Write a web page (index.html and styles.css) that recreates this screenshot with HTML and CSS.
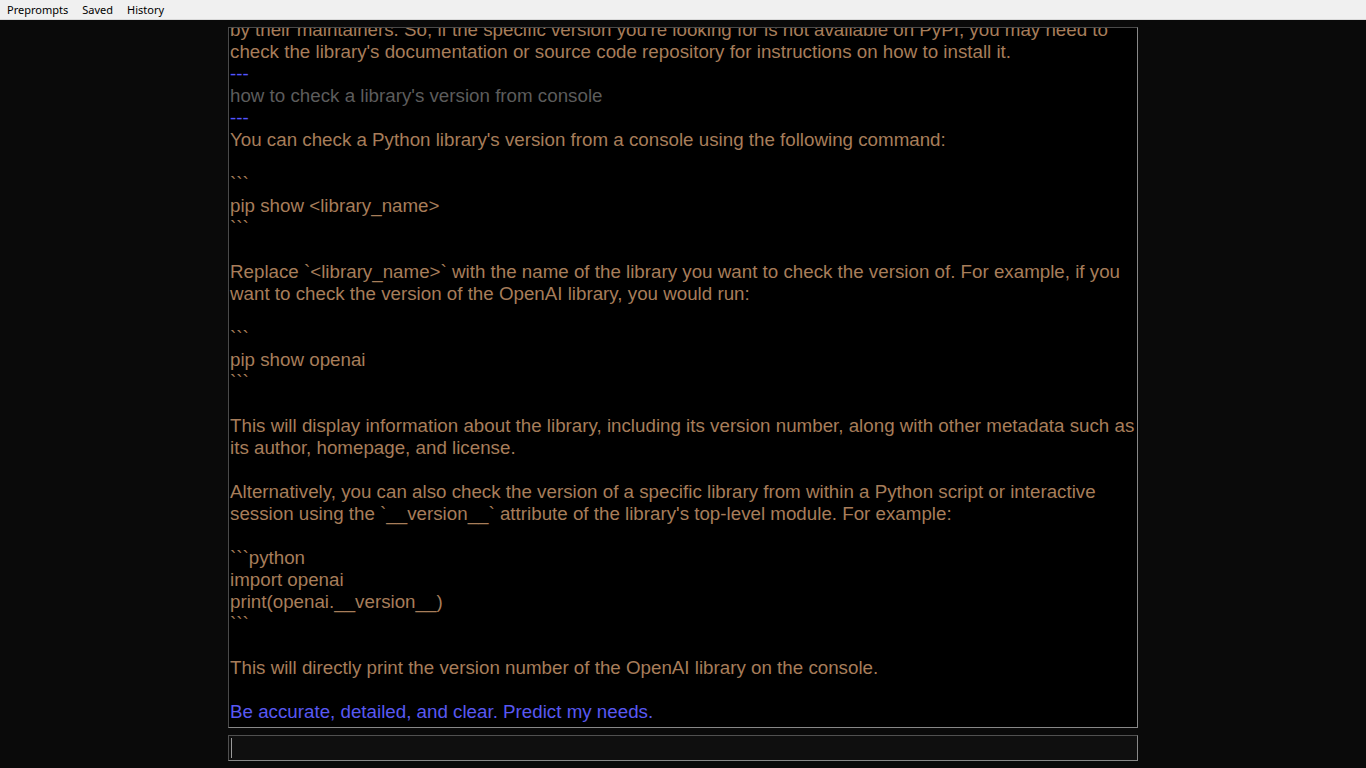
FILE: index.html
```html
<!DOCTYPE html>
<html>
<head>
<meta charset="utf-8">
<title>Chat</title>
<link rel="stylesheet" href="styles.css">
</head>
<body>
<nav class="menubar">
  <span class="menu-item">Preprompts</span>
  <span class="menu-item">Saved</span>
  <span class="menu-item">History</span>
</nav>
<main class="main">
  <div class="output">
    <div class="log">
<div class="line reply">Libraries that are not available on PyPI might be distributed through other channels, such as GitHub, or installed</div>
<div class="line reply">by their maintainers. So, if the specific version you're looking for is not available on PyPI, you may need to</div>
<div class="line reply">check the library's documentation or source code repository for instructions on how to install it.</div>
<div class="line sep">---</div>
<div class="line prompt">how to check a library's version from console</div>
<div class="line sep">---</div>
<div class="line reply">You can check a Python library's version from a console using the following command:</div>
<div class="line reply blank"></div>
<div class="line reply">```</div>
<div class="line reply">pip show &lt;library_name&gt;</div>
<div class="line reply">```</div>
<div class="line reply blank"></div>
<div class="line reply">Replace `&lt;library_name&gt;` with the name of the library you want to check the version of. For example, if you</div>
<div class="line reply">want to check the version of the OpenAI library, you would run:</div>
<div class="line reply blank"></div>
<div class="line reply">```</div>
<div class="line reply">pip show openai</div>
<div class="line reply">```</div>
<div class="line reply blank"></div>
<div class="line reply">This will display information about the library, including its version number, along with other metadata such as</div>
<div class="line reply">its author, homepage, and license.</div>
<div class="line reply blank"></div>
<div class="line reply">Alternatively, you can also check the version of a specific library from within a Python script or interactive</div>
<div class="line reply">session using the `__version__` attribute of the library's top-level module. For example:</div>
<div class="line reply blank"></div>
<div class="line reply">```python</div>
<div class="line reply">import openai</div>
<div class="line reply">print(openai.__version__)</div>
<div class="line reply">```</div>
<div class="line reply blank"></div>
<div class="line reply">This will directly print the version number of the OpenAI library on the console.</div>
<div class="line reply blank"></div>
<div class="line preprompt">Be accurate, detailed, and clear. Predict my needs.</div>
    </div>
  </div>
  <div class="input"><span class="caret"></span></div>
</main>
</body>
</html>
```
FILE: styles.css
```css
html, body {
  margin: 0;
  padding: 0;
  background: #0a0a0a;
  height: 100%;
  overflow: hidden;
}

.menubar {
  height: 19px;
  background: #f0f0f0;
  border-bottom: 1px solid #d8d8d8;
  display: flex;
  align-items: center;
  font-family: "Noto Sans", "Open Sans", sans-serif;
  font-size: 11px;
  color: #000;
}

.menu-item {
  padding: 0 7px;
  line-height: 19px;
}

.main {
  width: 910px;
  margin: 7px auto 0;
}

.output {
  box-sizing: border-box;
  height: 701px;
  background: #000;
  border: 1px solid #888;
  border-top-color: #4a4a4a;
  border-left-color: #4a4a4a;
  overflow: hidden;
  display: flex;
  flex-direction: column;
  justify-content: flex-end;
  padding: 0 2px 4px 1px;
}

.log {
  font-family: "Liberation Sans", Arial, sans-serif;
  font-size: 18.75px;
  line-height: 22px;
}

.line {
  white-space: pre;
  height: 22px;
}

.reply {
  color: #a77d5a;
}

.prompt {
  color: #5c5c5c;
}

.sep {
  color: #5555ff;
}

.preprompt {
  color: #5858f2;
}

.input {
  box-sizing: border-box;
  height: 26px;
  margin-top: 7px;
  background: #0f0f0f;
  border: 1px solid #888;
  border-top-color: #505050;
  border-left-color: #505050;
  display: flex;
  align-items: center;
  padding-left: 2px;
}

.caret {
  display: block;
  width: 1px;
  height: 20px;
  background: #9a9a9a;
}
```
